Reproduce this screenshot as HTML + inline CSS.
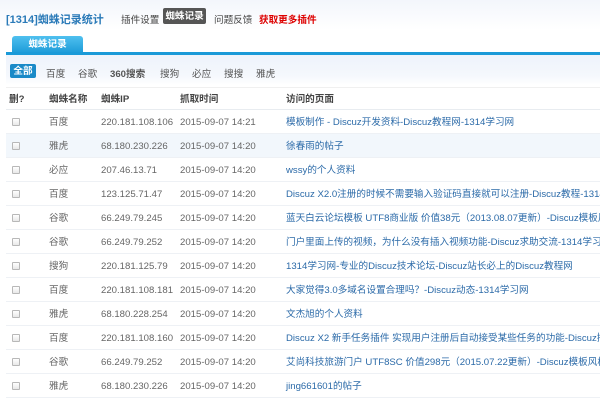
<!DOCTYPE html>
<html><head><meta charset="utf-8"><style>
*{margin:0;padding:0;box-sizing:border-box}
body{width:600px;height:400px;overflow:hidden;background:#fff;font-family:"Liberation Sans","Noto Sans CJK SC",sans-serif;font-size:9.6px;color:#666;position:relative}
.a{position:absolute;white-space:nowrap}
.top{position:absolute;left:0;top:0;width:600px;height:30px;background:linear-gradient(#f3f6fc,#fff)}
.row{position:absolute;left:6px;width:594px;height:24px;border-bottom:1px solid #eef1f5;overflow:hidden}
.cb{position:absolute;left:6px;top:8px;width:8px;height:8px;border:1px solid #b8b8b8;border-radius:1px;background:linear-gradient(#fff,#e8e8e8)}
.row span{position:absolute;top:7px;white-space:nowrap;line-height:12px}
.l{color:#2b6aa8}
</style></head><body>
<div class="top"></div>
<div class="a" style="left:6px;top:11px;font-size:11px;font-weight:bold;color:#2a7ab8">[1314]蜘蛛记录统计</div>
<div class="a" style="left:121px;top:12px;font-size:9.6px;color:#444">插件设置</div>
<div class="a" style="left:163px;top:8px;width:43px;height:16px;background:#555;border-radius:2px;color:#fff;font-size:9.6px;font-weight:bold;text-align:center;line-height:17px">蜘蛛记录</div>
<div class="a" style="left:214px;top:12px;font-size:9.6px;color:#444">问题反馈</div>
<div class="a" style="left:259px;top:12px;font-size:9.6px;font-weight:bold;color:#d00">获取更多插件</div>
<div class="a" style="left:12px;top:36px;width:71px;height:17px;background:linear-gradient(#4fc0ef,#1c9bd8);border-radius:3px 3px 0 0"></div>
<div class="a" style="left:12px;top:39px;width:71px;text-align:center;color:#fff;font-weight:bold;font-size:9.6px;line-height:12px">蜘蛛记录</div>
<div class="a" style="left:6px;top:52px;width:594px;height:3px;background:#1a9ad8"></div>
<div class="a" style="left:6px;top:55px;width:594px;height:30px;background:linear-gradient(#eef3fb,#f5f8fd 70%,#fff)"></div>
<div class="a" style="left:6px;top:87px;width:594px;height:1px;background:#f0f0f0"></div>
<div class="a" style="left:10px;top:64px;width:26px;height:14px;background:#1a8ac8;border-radius:2px;color:#fff;font-weight:bold;text-align:center;line-height:15px">全部</div>
<div class="a" style="left:46px;top:66px;color:#555">百度</div>
<div class="a" style="left:78px;top:66px;color:#555">谷歌</div>
<div class="a" style="left:110px;top:66px;color:#555;font-weight:bold">360搜索</div>
<div class="a" style="left:160px;top:66px;color:#555">搜狗</div>
<div class="a" style="left:192px;top:66px;color:#555">必应</div>
<div class="a" style="left:224px;top:66px;color:#555">搜搜</div>
<div class="a" style="left:256px;top:66px;color:#555">雅虎</div>
<div class="row" style="top:88px;height:22px;border-bottom:1px solid #e8ecf0">
<span style="left:3px;top:6px;font-weight:bold;color:#444">删?</span><span style="left:43px;top:6px;font-weight:bold;color:#444">蜘蛛名称</span><span style="left:95px;top:6px;font-weight:bold;color:#444">蜘蛛IP</span><span style="left:174px;top:6px;font-weight:bold;color:#444">抓取时间</span><span style="left:280px;top:6px;font-weight:bold;color:#444">访问的页面</span></div>
<div class="row" style="top:110px;"><i class="cb"></i><span style="left:43px">百度</span><span style="left:95px">220.181.108.106</span><span style="left:174px">2015-09-07 14:21</span><span class="l" style="left:280px">模板制作 - Discuz开发资料-Discuz教程网-1314学习网</span></div>
<div class="row" style="top:134px;background:#f2f7fc"><i class="cb"></i><span style="left:43px">雅虎</span><span style="left:95px">68.180.230.226</span><span style="left:174px">2015-09-07 14:20</span><span class="l" style="left:280px">徐春雨的帖子</span></div>
<div class="row" style="top:158px;"><i class="cb"></i><span style="left:43px">必应</span><span style="left:95px">207.46.13.71</span><span style="left:174px">2015-09-07 14:20</span><span class="l" style="left:280px">wssy的个人资料</span></div>
<div class="row" style="top:182px;"><i class="cb"></i><span style="left:43px">百度</span><span style="left:95px">123.125.71.47</span><span style="left:174px">2015-09-07 14:20</span><span class="l" style="left:280px">Discuz X2.0注册的时候不需要输入验证码直接就可以注册-Discuz教程-1314学习网</span></div>
<div class="row" style="top:206px;"><i class="cb"></i><span style="left:43px">谷歌</span><span style="left:95px">66.249.79.245</span><span style="left:174px">2015-09-07 14:20</span><span class="l" style="left:280px">蓝天白云论坛模板 UTF8商业版 价值38元（2013.08.07更新）-Discuz模板风格-1314学习网</span></div>
<div class="row" style="top:230px;"><i class="cb"></i><span style="left:43px">谷歌</span><span style="left:95px">66.249.79.252</span><span style="left:174px">2015-09-07 14:20</span><span class="l" style="left:280px">门户里面上传的视频，为什么没有插入视频功能-Discuz求助交流-1314学习网</span></div>
<div class="row" style="top:254px;"><i class="cb"></i><span style="left:43px">搜狗</span><span style="left:95px">220.181.125.79</span><span style="left:174px">2015-09-07 14:20</span><span class="l" style="left:280px">1314学习网-专业的Discuz技术论坛-Discuz站长必上的Discuz教程网</span></div>
<div class="row" style="top:278px;"><i class="cb"></i><span style="left:43px">百度</span><span style="left:95px">220.181.108.181</span><span style="left:174px">2015-09-07 14:20</span><span class="l" style="left:280px">大家觉得3.0多域名设置合理吗？-Discuz动态-1314学习网</span></div>
<div class="row" style="top:302px;"><i class="cb"></i><span style="left:43px">雅虎</span><span style="left:95px">68.180.228.254</span><span style="left:174px">2015-09-07 14:20</span><span class="l" style="left:280px">文杰旭的个人资料</span></div>
<div class="row" style="top:326px;"><i class="cb"></i><span style="left:43px">百度</span><span style="left:95px">220.181.108.160</span><span style="left:174px">2015-09-07 14:20</span><span class="l" style="left:280px">Discuz X2 新手任务插件 实现用户注册后自动接受某些任务的功能-Discuz插件-第26页</span></div>
<div class="row" style="top:350px;"><i class="cb"></i><span style="left:43px">谷歌</span><span style="left:95px">66.249.79.252</span><span style="left:174px">2015-09-07 14:20</span><span class="l" style="left:280px">艾尚科技旅游门户 UTF8SC 价值298元（2015.07.22更新）-Discuz模板风格-1314学习网</span></div>
<div class="row" style="top:374px;"><i class="cb"></i><span style="left:43px">雅虎</span><span style="left:95px">68.180.230.226</span><span style="left:174px">2015-09-07 14:20</span><span class="l" style="left:280px">jing661601的帖子</span></div>
</body></html>
